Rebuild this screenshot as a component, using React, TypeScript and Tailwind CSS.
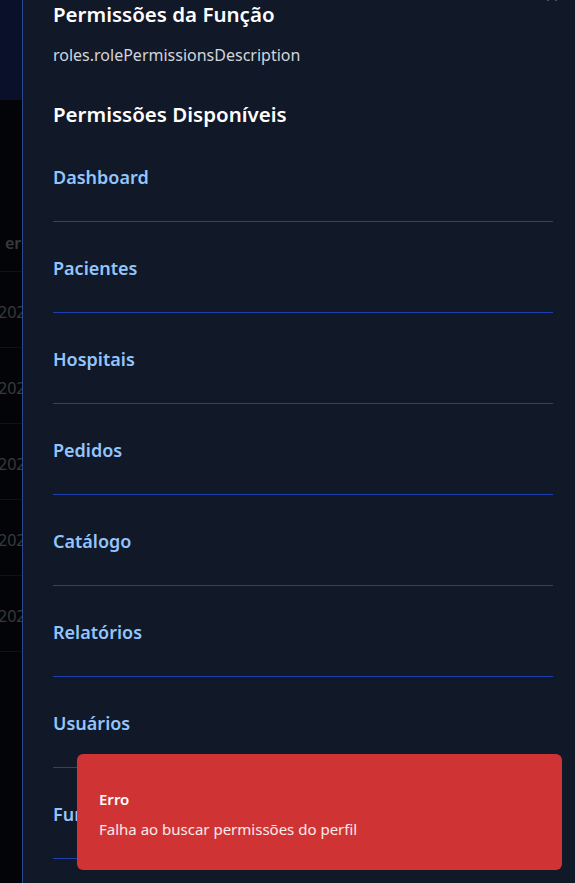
import React from "react";
import { X } from "lucide-react";

const permissions = [
  "Dashboard",
  "Pacientes",
  "Hospitais",
  "Pedidos",
  "Catálogo",
  "Relatórios",
  "Usuários",
  "Funções",
];

const App = () => {
  return (
    <div className="relative flex h-[883px] w-[575px] overflow-hidden bg-black font-['Noto_Sans',sans-serif]">
      {/* page behind the overlay */}
      <div className="flex w-[22px] shrink-0 flex-col overflow-hidden bg-[#030408] text-[#3a3a3a]">
        <div className="h-[100px] shrink-0 bg-[#0a1029]" />
        <div className="h-[172px] shrink-0 border-b border-[#0c1226] pl-[5px] pt-[129px] text-[16px] font-semibold leading-[28px]">
          er
        </div>
        {[0, 1, 2, 3, 4].map((i) => (
          <div
            key={i}
            className="flex h-[76px] shrink-0 items-start border-b border-[#0c1226] pt-[28px] text-[16px] whitespace-nowrap"
          >
            <span className="-ml-[2px]">2024</span>
          </div>
        ))}
      </div>

      {/* sheet */}
      <div className="relative flex-1 border-l border-[#2a4a8f] bg-[#111827] pl-[30px] pr-[22px]">
        <button className="absolute right-[15px] top-[-12px] text-gray-400">
          <X size={16} />
        </button>
        <h2 className="text-[20.5px] font-semibold leading-[28px] text-white">
          Permissões da Função
        </h2>
        <p className="mt-[15px] text-[16px] leading-[24px] text-gray-300">
          roles.rolePermissionsDescription
        </p>
        <h3 className="mt-[33px] text-[20.5px] font-semibold leading-[28px] text-white">
          Permissões Disponíveis
        </h3>
        <div className="mt-[3px] flex flex-col">
          {permissions.map((name) => (
            <div
              key={name}
              className="border-b border-[#1e40af] pb-[30px] pt-[32px] text-[18px] font-semibold leading-[28px] text-[#93c5fd]"
            >
              {name}
            </div>
          ))}
        </div>
      </div>

      {/* toast */}
      <div className="absolute left-[77px] top-[754px] flex h-[116px] w-[485px] flex-col gap-[10px] rounded-md bg-[#d03333] pl-[22px] pt-[35px] text-[15px] leading-[20px] text-white">
        <div className="font-semibold">Erro</div>
        <div className="text-white/90">Falha ao buscar permissões do perfil</div>
      </div>
    </div>
  );
};

export default App;
